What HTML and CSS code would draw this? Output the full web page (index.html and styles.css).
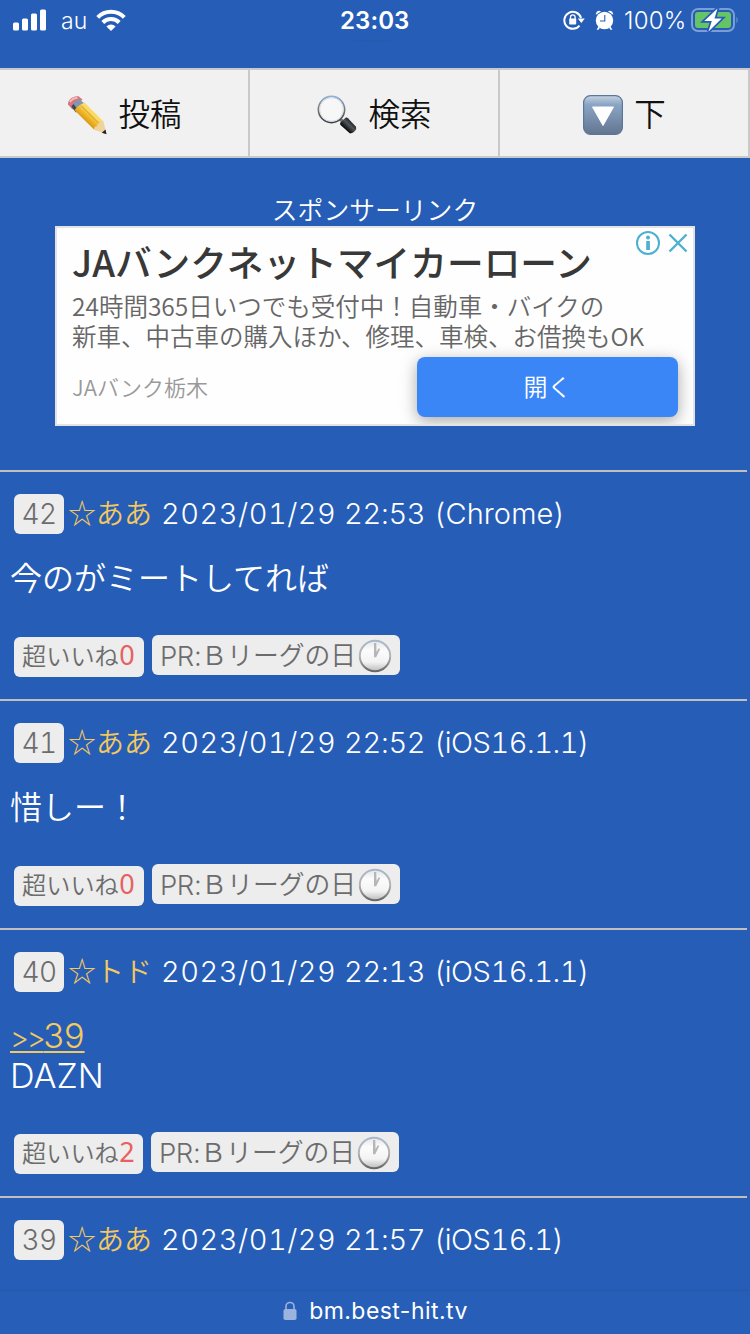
FILE: index.html
```html
<!DOCTYPE html>
<html lang="ja">
<head>
<meta charset="utf-8">
<title>bm.best-hit.tv</title>
<link rel="stylesheet" href="styles.css">
</head>
<body>
<svg class="defs" width="0" height="0" aria-hidden="true">
  <defs>
    <linearGradient id="clockRim" x1="0" y1="0" x2="0" y2="1"><stop offset="0" stop-color="#a9b7ca"/><stop offset=".5" stop-color="#b5b5b5"/><stop offset="1" stop-color="#666"/></linearGradient>
    <linearGradient id="clockFace" x1="0" y1="0" x2="0" y2="1"><stop offset="0" stop-color="#e2e5e9"/><stop offset=".3" stop-color="#fcfcfc"/><stop offset=".7" stop-color="#f3f3f3"/><stop offset="1" stop-color="#bbb"/></linearGradient>
    <symbol id="clock" viewBox="0 0 34 34">
      <circle cx="17" cy="17" r="15.2" fill="url(#clockFace)" stroke="url(#clockRim)" stroke-width="2"/>
      <path d="M16 4h2.200l.4 9 2-3.800 1.600.8-4 8.200h-2.200z" fill="#b6b6b6"/>
    </symbol>
  </defs>
</svg>
<header class="status">
  <svg class="signal" viewBox="0 0 34 22"><g fill="#fff"><rect x="0" y="13.5" width="6" height="8" rx="1.5"/><rect x="9" y="9.5" width="6" height="12" rx="1.5"/><rect x="18" y="4.500" width="6" height="17" rx="1.500"/><rect x="27" y=".5" width="6" height="21" rx="1.500"/></g></svg>
  <span class="carrier">au</span>
  <svg class="wifi" viewBox="0 0 30 22" fill="none" stroke="#fff" stroke-width="4"><path d="M1.700 8.300a18.800 18.800 0 0 1 26.600 0"/><path d="M6.800 13.500a11.600 11.600 0 0 1 16.400 0"/><path d="M15 22l-4.600-4.500a6.500 6.500 0 0 1 9.200 0z" fill="#fff" stroke="none"/></svg>
  <div class="time">23:03<span class="time-shade"></span></div>
  <div class="status-right">
    <svg class="rotation" viewBox="0 0 22 20"><path d="M16.500 15.600A8.500 8.500 0 1 1 18 8" fill="none" stroke="#fff" stroke-width="2"/><path d="M14.800 8.500h7l-3.500 4.500z" fill="#fff"/><rect x="6.200" y="8.500" width="7" height="6" rx=".8" fill="#fff"/><path d="M7.500 9V7.200a2.300 2.300 0 0 1 4.600 0V9" fill="none" stroke="#fff" stroke-width="1.300"/></svg>
    <svg class="alarm" viewBox="0 0 20 20"><g fill="#fff"><circle cx="9.500" cy="10.500" r="8.700"/><path d="M.8 4.800C.5 1.500 4-.3 6 1.500zM18.200 4.800C18.500 1.500 15-.3 13 1.500zM3.500 16.500l1.500 1.200-1.500 2H1.600zM15.500 16.500L14 17.700l1.500 2h1.900z"/></g><path d="M9.800 5v6H5" fill="none" stroke="#265db7" stroke-width="1.100"/></svg>
    <span class="percent">100%</span>
    <svg class="battery" viewBox="0 0 48 24"><rect x="1" y="1" width="42" height="22" rx="6" fill="none" stroke="#7d9ed4" stroke-width="2"/><rect x="4" y="4" width="36" height="16" rx="3" fill="#65c466"/><path d="M45.500 8.500q2.200 3.500 0 7z" fill="#7d9ed4"/><path d="M26.500.5L13.300 13h7.500L17.500 23.500 30.700 10.500h-7.200z" fill="#fff" stroke="#265db7" stroke-width="3.500" paint-order="stroke"/></svg>
  </div>
</header>
<nav class="nav">
  <a class="nav-item">
    <svg class="nav-icon" viewBox="0 0 40 40"><defs><linearGradient id="wood" x1="0" y1="1" x2="1" y2="0"><stop offset=".35" stop-color="#d99a16"/><stop offset=".48" stop-color="#efb92a"/><stop offset=".6" stop-color="#f9dc68"/></linearGradient></defs>
      <path d="M1 9.500C.5 5 6 .4 11.500 1.300L15.500 4.500 5.500 14.500z" fill="#d9747a"/><path d="M3 7q3-4.500 7.500-4" stroke="#f6b7b7" stroke-width="2" fill="none"/>
      <path d="M11.800 4L17 8 9 17.500 4.300 11.500Q7.500 6 11.800 4z" fill="#8296b2"/><path d="M4.300 11.500L9 17.500l2-2.500-4.500-6z" fill="#42464d"/>
      <path d="M17.800 7.700L36.500 26.500 27.200 34.800 7.500 15.200Q11 9.700 17.800 7.700z" fill="url(#wood)"/><path d="M14 10.500l19 19" stroke="#c98a12" stroke-width=".8"/>
      <path d="M36.500 26.500L39.500 39 27.200 34.800Q26.500 31.500 30 31.200q.2-4 6.500-4.700z" fill="#efd39d"/><path d="M38.500 34.500l1 4.700-4.700-1.500z" fill="#222"/></svg>
    <span class="nav-label">投稿</span>
  </a>
  <a class="nav-item">
    <svg class="nav-icon" viewBox="0 0 40 40"><defs><linearGradient id="rim" x1="0" y1="0" x2="0" y2="1"><stop offset="0" stop-color="#8fb0d6"/><stop offset=".5" stop-color="#777"/><stop offset="1" stop-color="#3c4146"/></linearGradient><linearGradient id="grip" x1="0" y1="1" x2="1" y2="0"><stop offset=".3" stop-color="#060606"/><stop offset=".55" stop-color="#50565c"/><stop offset=".8" stop-color="#111"/></linearGradient></defs>
      <path d="M22.500 23.500l4 3.800" stroke="#777" stroke-width="3.500"/><circle cx="14.500" cy="14.500" r="13.100" fill="#f7f7f7" stroke="url(#rim)" stroke-width="1.700"/><circle cx="14.500" cy="14.500" r="11.800" fill="none" stroke="#d8dde2"/>
      <path d="M23.500 27.500l5-4.700q1.500-.5 2.500.4l8 8.600q1 2-1 4.200t-5 2.500L23.500 30q-1-1.200 0-2.500z" fill="url(#grip)"/></svg>
    <span class="nav-label">検索</span>
  </a>
  <a class="nav-item">
    <svg class="nav-icon" viewBox="0 0 40 40"><defs><linearGradient id="key" x1="0" y1="0" x2="0" y2="1"><stop offset="0" stop-color="#c5d5e2"/><stop offset=".23" stop-color="#8ba5c5"/><stop offset="1" stop-color="#627590"/></linearGradient></defs><rect x=".6" y=".6" width="38.800" height="38.800" rx="7" fill="url(#key)" stroke="#5c7698" stroke-width="1.200"/><path d="M9.500 12h21L20 30.500z" fill="#fff" stroke="#fff" stroke-linejoin="round"/></svg>
    <span class="nav-label">下</span>
  </a>
</nav>
<section class="sponsor">
  <p class="sponsor-label">スポンサーリンク</p>
  <div class="ad">
    <div class="ad-choices">
      <svg width="24" height="24" viewBox="0 0 24 24"><circle cx="12" cy="12" r="11" fill="none" stroke="#4db0d0" stroke-width="2"/><circle cx="12" cy="6.500" r="2" fill="#4db0d0"/><rect x="10.200" y="10" width="3.700" height="9" fill="#4db0d0"/></svg>
      <svg width="20" height="20" viewBox="0 0 20 20"><path d="M1.500 1.500l17 17M18.500 1.500l-17 17" stroke="#4db0d0" stroke-width="2.400"/></svg>
    </div>
    <h2 class="ad-title">JAバンクネットマイカーローン</h2>
    <p class="ad-text">24時間365日いつでも受付中！自動車・バイクの<br>新車、中古車の購入ほか、修理、車検、お借換もOK</p>
    <div class="ad-foot"><span class="advertiser">JAバンク栃木</span><a class="cta">開く</a></div>
  </div>
</section>
<main>
  <article class="post">
    <div class="meta"><span class="number">42</span><span class="author">☆ああ</span><span class="date">2023/01/29</span><span class="clock-time">22:53</span><span class="agent agent-name">(Chrome)</span></div>
    <p class="message">今のがミートしてれば</p>
    <div class="actions"><span class="like">超いいね<b>0</b></span><span class="pr"><span class="pr-latin">PR:</span><span class="pr-text">Ｂリーグの日</span><svg class="clock"><use href="#clock"/></svg></span></div>
  </article>
  <article class="post">
    <div class="meta"><span class="number">41</span><span class="author">☆ああ</span><span class="date">2023/01/29</span><span class="clock-time">22:52</span><span class="agent">(iOS16.1.1)</span></div>
    <p class="message">惜しー！</p>
    <div class="actions"><span class="like">超いいね<b>0</b></span><span class="pr"><span class="pr-latin">PR:</span><span class="pr-text">Ｂリーグの日</span><svg class="clock"><use href="#clock"/></svg></span></div>
  </article>
  <article class="post reply">
    <div class="meta"><span class="number">40</span><span class="author">☆トド</span><span class="date">2023/01/29</span><span class="clock-time">22:13</span><span class="agent">(iOS16.1.1)</span></div>
    <p class="message latin"><a class="anchor"><span class="arrows">&gt;&gt;</span>39</a><br>DAZN</p>
    <div class="actions"><span class="like">超いいね<b>2</b></span><span class="pr"><span class="pr-latin">PR:</span><span class="pr-text">Ｂリーグの日</span><svg class="clock"><use href="#clock"/></svg></span></div>
  </article>
  <article class="post last">
    <div class="meta"><span class="number">39</span><span class="author">☆ああ</span><span class="date">2023/01/29</span><span class="clock-time">21:57</span><span class="agent">(iOS16.1)</span></div>
  </article>
</main>
<footer class="address">
  <svg class="lock" viewBox="0 0 14 20"><rect x=".5" y="8" width="13" height="11" rx="1.800" fill="#9bb4de"/><path d="M3 9V5.500a4 4 0 0 1 8 0V9" fill="none" stroke="#9bb4de" stroke-width="1.600"/></svg>
  <span>bm.best-hit.tv</span>
</footer>
</body>
</html>
```
FILE: styles.css
```css
* { box-sizing: border-box; }
body { margin: 0; width: 750px; height: 1334px; overflow: hidden; display: flex; flex-direction: column; background: #265db7; color: #fff; font-family: "Noto Sans CJK JP", sans-serif; font-weight: 350; }
p, h2 { margin: 0; white-space: nowrap; }
svg { flex: none; display: block; }
.defs { position: absolute; }

.status { height: 68px; flex: none; display: grid; grid-template-columns: 34px 27px 30px 1fr auto; padding: 0 11px 0 13px; align-items: start; font-family: Inter, sans-serif; line-height: 42px; }
.signal { width: 34px; height: 22px; margin-top: 8.500px; }
.carrier { font-size: 23px; font-weight: 350; margin-left: 14px; }
.wifi { width: 30px; height: 22px; margin: 9px 0 0 22px; }
.time { font-size: 24px; font-weight: 600; letter-spacing: .1px; margin-left: 236px; height: 42px; }
.time-shade { display: block; width: 56px; height: 2px; margin: -2px 0 0 7px; background: radial-gradient(closest-side, #2457a3, #265db7); }
.status-right { display: flex; }
.rotation { width: 22px; height: 20px; margin: 10px 10px 0 0; }
.alarm { width: 20px; height: 20px; margin: 10px 9px 0 0; }
.percent { font-size: 24px; font-weight: 350; letter-spacing: .2px; width: 65px; }
.battery { width: 48px; height: 24px; margin: 8px 0 0 2px; }

.nav { height: 90px; flex: none; display: grid; grid-template-columns: repeat(3, 1fr); border: solid #c9c9c9; border-width: 2px 0; background: #f1f1f1; color: #111; }
.nav-item { display: flex; align-items: center; justify-content: center; gap: 11px; border-right: 2px solid #c9c9c9; padding: 4px 0 0 1px; }
.nav-icon { width: 40px; height: 40px; }
.nav-label { font-size: 31.500px; line-height: 40px; margin-top: -6px; }

.sponsor { height: 312px; flex: none; padding: 32px 50px 0; }
.sponsor-label { height: 36px; line-height: 37px; font-size: 25.800px; text-align: center; }
.ad { position: relative; height: 200px; margin: 0 5px; padding: 11px 15px 7px; display: flex; flex-direction: column; border: 2px solid #e3e3e3; background: #fefefe; overflow: hidden; }
.ad-choices { position: absolute; top: 3px; right: 5px; display: flex; align-items: center; gap: 8px; }
.ad-title { font-size: 36.700px; line-height: 44px; font-weight: 500; color: #383838; }
.ad-text { margin-top: 8px; font-size: 24.500px; line-height: 30px; color: #666; }
.ad-foot { margin-top: 6px; height: 60px; display: flex; justify-content: space-between; align-items: center; }
.advertiser { font-size: 22px; line-height: 40px; margin-top: -3px; color: #999; }
.cta { width: 261px; height: 60px; border-radius: 8px; background: #3b86f7; color: #fff; font-size: 24px; line-height: 58px; text-align: center; box-shadow: 0 4px 16px rgba(0, 0, 0, .35); }

.post { width: 747px; height: 229px; padding: 22px 0 0 10px; border-top: 2px solid #bfbfbf; }
.meta { display: flex; align-items: center; height: 40px; padding-left: 4px; line-height: 40px; white-space: nowrap; font-size: 28px; }
.number { width: 50px; height: 40px; border-radius: 6px; background: #ededed; color: #6c6c6c; text-align: center; font: 300 28px/41px Inter, sans-serif; letter-spacing: -.5px; font-feature-settings: "tnum"; }
.author { margin: -4px 0 0 4px; width: 84px; color: #f4c95d; }
.date, .clock-time, .agent { font: 300 29px/40px Inter, sans-serif; font-feature-settings: "tnum"; }
.date { margin-left: 9px; width: 183px; letter-spacing: .5px; }
.clock-time { width: 90px; letter-spacing: -.3px; }
.agent { letter-spacing: -.5px; }
.agent-name { letter-spacing: .1px; }
.message { height: 40px; margin-top: 24px; font-size: 32px; line-height: 37px; }
.actions { display: flex; gap: 8px; margin: 37px 0 0 4px; height: 42px; }
.like, .pr { height: 40px; line-height: 36px; border-radius: 6px; background: #ededed; color: #6c6c6c; padding-left: 8px; white-space: nowrap; }
.like { width: 130px; margin-top: 2px; font-size: 24.200px; }
.like b { color: #e8605f; font-weight: 400; font-family: "Noto Sans", sans-serif; font-size: 27px; line-height: 1; margin-left: .5px; }
.pr { width: 248px; display: flex; align-items: center; font-size: 25.800px; }
.pr-latin { font: 300 27.500px/38px Inter, sans-serif; letter-spacing: -.4px; margin-top: 1px; }
.pr-text { margin-top: -3px; }
.clock { width: 34px; height: 34px; margin: 1px 0 0 2px; }
.reply { height: 268px; }
.reply .actions { margin-top: 36px; }
.reply .like { width: 129px; }
.latin { height: 80px; font: 300 34.200px/40px Inter, sans-serif; }
.anchor { color: #f4c95d; text-decoration: underline; text-decoration-thickness: 2px; text-underline-offset: 3px; }
.arrows { font-size: 29px; line-height: 1; letter-spacing: -2.300px; }
.last { height: 94px; }

.address { height: 44px; flex: none; display: flex; justify-content: center; align-items: center; gap: 12px; padding: 0 0 3px 1px; background: #275fb8; border-top: 1px solid #2858a5; font: 400 23px/40px Inter, sans-serif; letter-spacing: .45px; }
.lock { width: 14px; height: 20px; }
```
